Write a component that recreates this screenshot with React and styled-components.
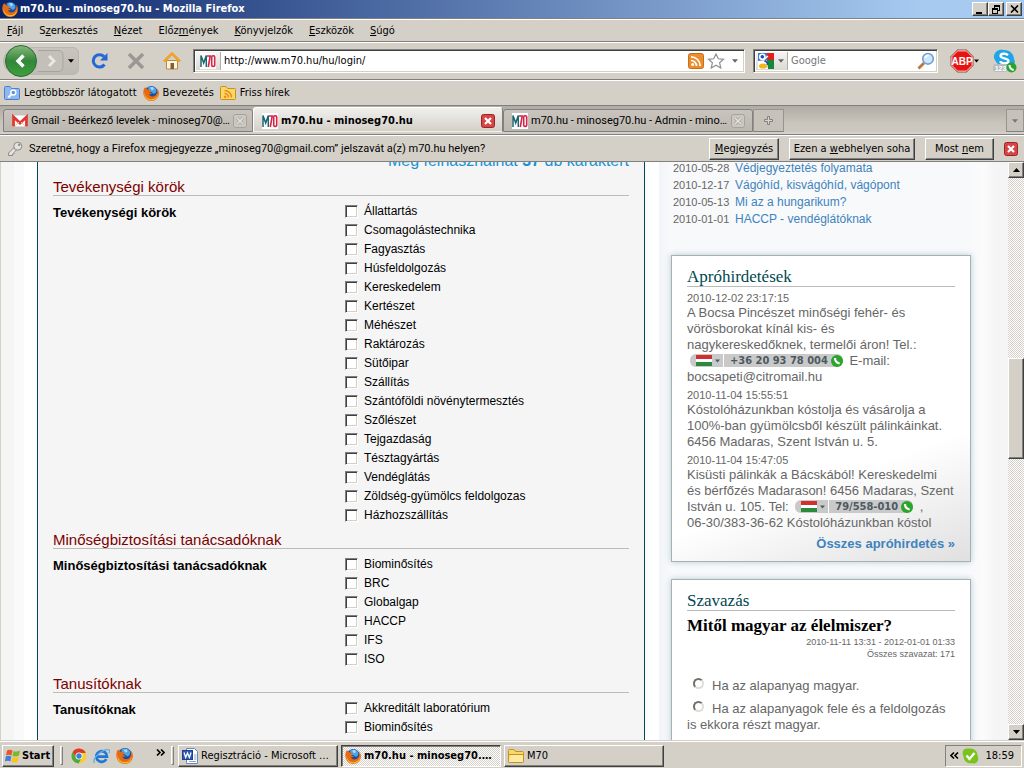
import React from "react";
import styled, { createGlobalStyle, css } from "styled-components";

const ui = `"DejaVu Sans Condensed", "Noto Sans", sans-serif`;
const narrow = `Roboto, "Noto Sans", sans-serif`;
const sans = `"Liberation Sans", Arial, sans-serif`;
const serif = `"Liberation Serif", "Times New Roman", serif`;
const face = "#d4d0c8";
const shadow = "#808080";

const Global = createGlobalStyle`
  * { box-sizing: border-box; }
  html, body, #root { height: 100%; }
  body { margin: 0; background: ${face}; font: 11px/14px ${ui}; color: #000; overflow: hidden; }
  button, input { font: inherit; color: inherit; margin: 0; }
  button { cursor: default; white-space: nowrap; }
  svg { display: block; flex: none; }
  a { text-decoration: none; }
`;

const raised = css`
  border: 1px solid;
  border-color: #fff #404040 #404040 #fff;
  box-shadow: inset -1px -1px 0 ${shadow};
  background: ${face};
`;

const Desktop = styled.div`
  height: 100vh;
  display: flex;
  flex-direction: column;
`;

/* ---------- window chrome ---------- */
const TitleBar = styled.header`
  height: 18px;
  flex: none;
  display: flex;
  align-items: center;
  gap: 2px;
  padding: 0 2px;
  color: #fff;
  background: linear-gradient(90deg, #0a246a, #a6caf0 90%);
`;
const Title = styled.h1`
  flex: 1;
  margin: 0;
  font-size: 11px;
  font-weight: bold;
  white-space: nowrap;
`;
const CaptionButtons = styled.div`
  display: flex;
`;
const CaptionButton = styled.button`
  ${raised}
  width: 16px;
  height: 14px;
  padding: 0;
  display: flex;
  align-items: center;
  justify-content: center;
  &:last-child { margin-left: 2px; }
`;
const Bar = styled.div`
  flex: none;
  display: flex;
  align-items: center;
  height: ${(p) => p.$h}px;
  border-top: 1px solid #fff;
  border-bottom: 1px solid ${shadow};
`;
const MenuBar = styled(Bar).attrs({ as: "nav" })`
  margin-top: 1px;
  box-shadow: 0 -1px 0 ${shadow};
`;
const MenuItem = styled.button`
  border: 0;
  background: none;
  padding: 0 8px;
  &:first-child { padding-left: 7px; }
`;
const NavBar = styled(Bar)`
  padding: 0 7px 0 3px;
`;
const HistoryPill = styled.div`
  display: flex;
  align-items: center;
  width: 76px;
  height: 28px;
  border-radius: 14px 6px 6px 14px;
  border: 1px solid #bab6b0;
  background: linear-gradient(#c9c5be, #bdb9b3);
`;
const IconButton = styled.button`
  border: 0;
  padding: 0;
  background: none;
  width: ${(p) => p.$w || 18}px;
  display: flex;
  align-items: center;
  justify-content: center;
`;
const NavIcons = styled.div`
  display: flex;
  gap: 18px;
  margin: 0 12px;
`;
const Field = styled.div`
  display: flex;
  align-items: center;
  height: 24px;
  min-width: 0;
  background: #fff;
  border: 1px solid;
  border-color: ${shadow} #fff #fff ${shadow};
  box-shadow: inset 1px 1px 0 #404040, inset -1px -1px 0 ${face};
  padding: 2px;
`;
const UrlField = styled(Field)`
  flex: 1;
`;
const SearchField = styled(Field)`
  width: 185px;
  margin-left: 8px;
`;
const FieldHead = styled.div`
  align-self: stretch;
  display: flex;
  align-items: center;
  gap: 4px;
  padding: 0 4px;
  border-right: 1px solid #b0aca6;
  background: linear-gradient(#f6f5f3, #dcd9d3);
`;
const SearchHead = styled(FieldHead)`
  padding: 0 3px 0 2px;
`;
const TextInput = styled.input`
  flex: 1;
  min-width: 0;
  border: 0;
  outline: 0;
  background: none;
  padding: 0 3px;
  &::placeholder { color: #777; opacity: 1; }
`;
const FieldIcons = styled.div`
  display: flex;
  align-items: center;
  gap: 3px;
`;
const Extensions = styled.div`
  display: flex;
  align-items: center;
  gap: 14px;
  margin-left: 11px;
`;
const Bookmarks = styled(Bar)`
  gap: 6px;
  padding: 0 4px;
`;
const Bookmark = styled.a`
  display: flex;
  align-items: center;
  gap: 4px;
  color: #000;
  white-space: nowrap;
`;

/* ---------- tabs ---------- */
const TabStrip = styled.div`
  flex: none;
  display: flex;
  align-items: flex-end;
  height: 29px;
  padding: 0 0 2px 3px;
  background: linear-gradient(#b0aca4, #c9c5bd 60%, #cdc9c1);
  border-bottom: 1px solid ${shadow};
  box-shadow: inset 0 -2px 0 ${face};
`;
const Tab = styled.div`
  flex: 0 1 250px;
  min-width: 0;
  display: flex;
  align-items: center;
  gap: 3px;
  height: 23px;
  padding: 0 7px 0 8px;
  border: 1px solid ${shadow};
  border-radius: 3px 3px 0 0;
  background: linear-gradient(#c9c5be, #bcb8b0);
  font-family: ${narrow};
  ${(p) =>
    p.$active &&
    css`
      height: 25px;
      padding-top: 2px;
      border-color: #fff ${shadow} transparent #fff;
      background: linear-gradient(#f1f0ed, ${face});
      font-family: ${ui};
      font-weight: bold;
    `}
`;
const TabLabel = styled.span`
  flex: 1;
  white-space: nowrap;
`;
const TabAction = styled.button`
  height: 23px;
  width: ${(p) => p.$w}px;
  padding: 0;
  display: flex;
  align-items: center;
  justify-content: center;
  border: 1px solid #98948e;
  border-bottom-color: ${shadow};
  background: #c6c2ba;
`;
const Spacer = styled.div`
  flex: 1;
`;
const Notice = styled(Bar)`
  gap: 10px;
  padding: 0 6px 0 7px;
`;
const NoticeText = styled.span`
  flex: 1;
  display: flex;
  align-items: center;
  gap: 6px;
  font-family: ${narrow};
  white-space: nowrap;
`;
const PushButton = styled.button`
  ${raised}
  width: ${(p) => p.$w}px;
  height: 22px;
  padding: 0;
`;

/* ---------- web page ---------- */
const Viewport = styled.div`
  flex: 1;
  min-height: 0;
  display: flex;
`;
const Page = styled.main`
  flex: 1;
  min-width: 0;
  display: flex;
  overflow: hidden;
  font-family: ${sans};
  border-left: 1px solid ${face};
  background: #f5f5f5;
`;
const Frame = styled.div`
  flex: 1;
  display: flex;
  margin-left: 13px;
  padding: 0 14px 0 23px;
  background: linear-gradient(90deg, #fafafa 10px, #fff 10px);
`;
const Form = styled.form`
  flex: 1;
  min-height: 0;
  padding: 0 15px;
  border: solid #004a55;
  border-width: 0 1px;
  background: #f5f5f5;
`;
const Scrolled = styled.div`
  margin-top: ${(p) => -p.$by}px;
`;
const Counter = styled.p`
  margin: 0 0 1px;
  font-size: 16px;
  line-height: 20px;
  text-align: right;
  color: #1793d6;
`;
const Group = styled.fieldset`
  margin: 0;
  border: 0;
  padding: 0;
`;
const GroupTitle = styled.h2`
  margin: 0 0 6px;
  padding-top: 7px;
  border-bottom: 1px solid #bbb;
  font-size: 15px;
  line-height: 16px;
  font-weight: normal;
  color: #7d0000;
`;
const GroupBody = styled.div`
  display: grid;
  grid-template-columns: 292px 1fr;
`;
const GroupLabel = styled.strong`
  font-size: 13px;
  line-height: 22px;
`;
const CheckRow = styled.label`
  display: flex;
  align-items: center;
  gap: 6px;
  font-size: 12px;
  line-height: 19px;
`;
const Check = styled.input.attrs({ type: "checkbox" })`
  appearance: none;
  width: 13px;
  height: 13px;
  background: #fff;
  border: 1px solid;
  border-color: ${shadow} #fff #fff ${shadow};
  box-shadow: inset 1px 1px 0 #404040, inset -1px -1px 0 ${face};
`;

const Side = styled.aside`
  flex: 0 0 349px;
  padding: 0 37px 0 12px;
  color: #666;
  background: linear-gradient(90deg, #f1f4f8, #f8f9fb 12px, #f8f9fb 310px, #fbfbfb 324px, #f5f5f5 336px);
`;
const NewsList = styled.ul`
  list-style: none;
  margin: 0 0 27px;
  padding: 0 0 0 2px;
`;
const NewsItem = styled.li`
  display: grid;
  grid-template-columns: 62px 1fr;
  font-size: 12px;
  line-height: 17px;
  white-space: nowrap;
  a { color: #3f83bd; }
  time { font-size: 11px; line-height: 16px; }
`;
const Card = styled.section`
  margin-bottom: 17px;
  padding: 12px 15px 9px;
  border: 1px solid #a7b0b3;
  box-shadow: 0 0 6px #b4cbd3;
  background: ${(p) => (p.$shaded ? "linear-gradient(160deg, #fff 68%, #e0e0e0)" : "#fff")};
`;
const CardTitle = styled.h2`
  margin: 0 0 5px;
  border-bottom: 1px solid #bbb;
  font: 17px/18px ${serif};
  color: #004752;
`;
const AdTime = styled.time`
  display: block;
  font-size: 11px;
  line-height: 13px;
`;
const AdText = styled.p`
  margin: 0 0 4px;
  font-size: 13px;
  line-height: 16px;
  white-space: nowrap;
`;
const MoreLink = styled.a`
  display: block;
  padding-top: 1px;
  text-align: right;
  font-size: 13px;
  line-height: 16px;
  font-weight: bold;
  color: #3f83bd;
`;
const Chip = styled.button`
  display: inline-flex;
  align-items: center;
  vertical-align: top;
  gap: 3px;
  height: 13px;
  margin: 1px 3px 0;
  padding: 0 0 0 6px;
  border: 0;
  border-radius: 6px;
  background: #c9c9c9;
  font: bold 11px/13px ${ui};
  color: #4c5a60;
  span { border-left: 1px solid #fff; padding-left: 6px; }
`;
const PollTitle = styled.h3`
  margin: 0;
  font: bold 17px/20px ${serif};
  color: #000;
`;
const PollMeta = styled.p`
  margin: 0 0 18px;
  text-align: right;
  font-size: 9px;
  line-height: 12px;
`;
const PollOption = styled.label`
  display: block;
  margin-bottom: 7px;
  font-size: 13px;
  line-height: 16px;
  white-space: nowrap;
`;
const Radio = styled.input.attrs({ type: "radio", name: "poll" })`
  appearance: none;
  width: 11px;
  height: 11px;
  && { margin: 0 8px 0 6px; }
  vertical-align: 1px;
  border-radius: 50%;
  background: #fff;
  border: 2px solid;
  border-color: #707070 #e0ddd6 #e0ddd6 #707070;
`;

/* ---------- scroll bar ---------- */
const ScrollBar = styled.div`
  flex: 0 0 16px;
  display: flex;
  flex-direction: column;
  background: repeating-conic-gradient(#fff 0 25%, ${face} 0 50%) 0 0 / 2px 2px;
`;
const ScrollButton = styled.button`
  ${raised}
  height: 16px;
  padding: 0;
  display: flex;
  align-items: center;
  justify-content: center;
`;
const Stretch = styled.div`
  flex: ${(p) => p.$n} 0 0;
`;
const Thumb = styled(Stretch)`
  ${raised}
`;

/* ---------- task bar ---------- */
const TaskBar = styled.footer`
  flex: none;
  display: flex;
  align-items: center;
  height: 28px;
  padding: 2px 2px 0;
  border-top: 1px solid ${face};
  box-shadow: inset 0 1px 0 #fff;
`;
const StartButton = styled.button`
  ${raised}
  width: 52px;
  height: 22px;
  padding: 0 2px;
  display: flex;
  align-items: center;
  gap: 1px;
  font-weight: bold;
`;
const Grip = styled.div`
  width: 3px;
  height: 19px;
  margin: ${(p) => p.$m};
  border: 1px solid;
  border-color: #fff ${shadow} ${shadow} #fff;
`;
const QuickLaunch = styled.div`
  display: flex;
  align-items: center;
  gap: 6px;
`;
const Chevron = styled.button`
  border: 0;
  background: none;
  padding: 0 0 ${(p) => p.$lift || 0}px;
  width: 12px;
  margin-left: ${(p) => p.$ml || 0}px;
  display: flex;
  justify-content: center;
`;
const TaskList = styled.div`
  flex: 1;
  display: flex;
  gap: 3px;
`;
const TaskButton = styled.button`
  ${raised}
  flex: 0 1 160px;
  min-width: 0;
  height: 22px;
  padding: 0 3px;
  display: flex;
  align-items: center;
  gap: 3px;
  text-align: left;
  ${(p) =>
    p.$active &&
    css`
      font-weight: bold;
      border-color: #404040 #fff #fff #404040;
      box-shadow: inset 1px 1px 0 ${shadow};
      background: repeating-conic-gradient(#fff 0 25%, ${face} 0 50%) 0 0 / 2px 2px;
    `}
`;
const Tray = styled.div`
  width: 77px;
  height: 22px;
  padding: 0 7px 0 2px;
  display: flex;
  align-items: center;
  gap: 2px;
  border: 1px solid;
  border-color: ${shadow} #fff #fff ${shadow};
  time { flex: 1; text-align: right; }
`;

/* ---------- icons ---------- */
const Firefox = ({ s = 16 }) => (
  <svg width={s} height={s} viewBox="0 0 16 16">
    <circle cx="8.300" cy="7.600" r="6.600" fill="#1d4f9e" />
    <path d="M5 2.500C7 .8 11 1 13 4c1 2 0 4-2 5L8 7l-2-.5z" fill="#4aa4e6" />
    <path d="M7 2.500l3-.5 1 2-2 1.500z" fill="#a9dcf7" />
    <path d="M1.500 2.500C.2 5 0 8 .8 10.500 2 14 5 16 8.200 16c4.300 0 7.600-3.200 7.700-7.500 0-2-.6-3.800-1.600-5 .3 2 .2 3.500-.6 5-.8 2-2.300 3-4.200 3-2 0-3.300-1-3.500-2.500 1 .4 2.200.2 3-.6l-2.800-1.200 2-1.600C7 5 5.500 5.200 4.500 4.300 3.500 4 3 3.500 3.200 2 2.500 2.300 2 3 1.800 3.500z" fill="#e66a12" />
    <path d="M1.500 7c.2 4 3 7 6.500 7.200 3.500.2 6-2 7-5.500-.2 4.500-3 6.600-6.700 6.700C4 15.300.8 12 1.500 7z" fill="#fbb829" />
  </svg>
);
const M70 = () => (
  <svg width="16" height="16" viewBox="0 0 16 16">
    <rect width="16" height="16" fill="#fff" />
    <path d="M1 14V2.500L3.700 10 6.300 2.500V14" fill="none" stroke="#1c6670" strokeWidth="1.500" />
    <path d="M7 3h3.200L8.300 14" fill="none" stroke="#d3264b" strokeWidth="1.600" />
    <rect x="11.700" y="2.800" width="3" height="10.600" rx="1.200" fill="none" stroke="#d3264b" strokeWidth="1.600" />
  </svg>
);
const Caret = ({ c = "#000", up, w = 7 }) => (
  <svg width={w} height="4" viewBox="0 0 7 4">
    <path d={up ? "M0 4h7L3.500 0z" : "M0 0h7L3.500 4z"} fill={c} />
  </svg>
);
const BackIcon = () => (
  <svg width="34" height="34" viewBox="0 0 34 34">
    <defs>
      <linearGradient id="bk" x1="0" y1="0" x2="0" y2="1">
        <stop offset="0" stopColor="#86b97c" />
        <stop offset=".5" stopColor="#33863a" />
        <stop offset="1" stopColor="#3fa03c" />
      </linearGradient>
    </defs>
    <circle cx="17" cy="17" r="15.500" fill="url(#bk)" stroke="#2c6b33" />
    <path d="M19.500 11.500L14 17l5.500 5.500" fill="none" stroke="#fff" strokeWidth="3.400" />
  </svg>
);
const ForwardIcon = () => (
  <svg width="26" height="22" viewBox="0 0 26 22">
    <path d="M0 .5h20q5 0 5 5v11q0 5-5 5H0" fill="#c3bfb9" stroke="#a7a39d" />
    <path d="M11 6l5 5-5 5" fill="none" stroke="#ebe9e6" strokeWidth="2.800" />
  </svg>
);
const Reload = () => (
  <svg width="18" height="18" viewBox="0 0 18 18">
    <path d="M13.500 12.500A6.200 6.200 0 1 1 13 4.600" fill="none" stroke="#2268d8" strokeWidth="3" />
    <path d="M16.500 1v7.500H9z" fill="#2268d8" />
  </svg>
);
const Stop = () => (
  <svg width="18" height="18" viewBox="0 0 18 18">
    <path d="M2 2l14 14M16 2L2 16" stroke="#9b9894" strokeWidth="3.600" />
  </svg>
);
const Home = () => (
  <svg width="18" height="18" viewBox="0 0 18 18">
    <path d="M3.500 8.500h11V17h-11z" fill="#fdf6e2" stroke="#b98a3b" />
    <path d="M1 9.500L9 1.500l8 8" fill="none" stroke="#f0a326" strokeWidth="2.600" />
    <path d="M7.500 11h3.500v6H7.500z" fill="#8a5a2b" />
  </svg>
);
const Rss = () => (
  <svg width="16" height="16" viewBox="0 0 16 16">
    <rect x=".5" y=".5" width="15" height="15" rx="2" fill="#ec8d2e" stroke="#c96f1c" />
    <circle cx="4.600" cy="11.500" r="1.500" fill="#fff" />
    <path d="M3 7.500a5.500 5.500 0 0 1 5.500 5.500M3 3.800A9.200 9.200 0 0 1 12.200 13" fill="none" stroke="#fff" strokeWidth="1.700" />
  </svg>
);
const Star = () => (
  <svg width="18" height="16" viewBox="0 0 18 16">
    <path d="M9 1l2.300 4.800 5.200.5-3.900 3.500 1.200 5.200L9 12.300 4.200 15l1.200-5.200L1.500 6.300l5.200-.5z" fill="#fff" stroke="#8f8f8f" strokeWidth="1.200" />
  </svg>
);
const Google = () => (
  <svg width="16" height="16" viewBox="0 0 16 16">
    <path d="M0 0h9v9H0z" fill="#3b77d8" />
    <path d="M9 0h7v7H9z" fill="#e0201b" />
    <path d="M9 7h7v9H8z" fill="#128a39" />
    <path d="M0 8l9-1 1 9H0z" fill="#fff" />
    <path d="M6.500 8q3.500.5 3 4" fill="none" stroke="#1d4fae" strokeWidth="2" />
    <circle cx="4.300" cy="3.800" r="2.600" fill="#1d4fae" stroke="#fff" strokeWidth="1.600" />
    <path d="M6 6.500L10 3" stroke="#fff" strokeWidth="1.400" />
    <ellipse cx="5" cy="13" rx="4" ry="2.600" fill="#f3b614" />
  </svg>
);
const Magnifier = () => (
  <svg width="18" height="18" viewBox="0 0 18 18">
    <path d="M1.500 16.500L7 11" stroke="#b97742" strokeWidth="2.800" />
    <circle cx="11" cy="6.800" r="5.300" fill="#cfe6fb" stroke="#6f9fd6" strokeWidth="1.600" />
    <path d="M8 6a3.500 3.500 0 0 1 3.500-2.500" fill="none" stroke="#fff" strokeWidth="1.500" />
  </svg>
);
const Abp = () => (
  <svg width="24" height="24" viewBox="0 0 24 24">
    <path d="M7.300.8h9.400l6.500 6.500v9.400l-6.500 6.500H7.300L.8 16.700V7.300z" fill="#e8130f" stroke="#8f8b86" />
    <path d="M7.600 1.900h8.800l5.700 5.700v8.800l-5.700 5.700H7.600l-5.700-5.700V7.600z" fill="none" stroke="#fff" strokeWidth=".8" />
    <text x="12" y="15.500" textAnchor="middle" fill="#fff" fontSize="10" fontWeight="bold" fontFamily="Liberation Sans">ABP</text>
  </svg>
);
const Skype = () => (
  <svg width="24" height="24" viewBox="0 0 24 24">
    <path d="M3 3c3-3 6-2 8-2 6 0 10 4 10 9 2 4 0 6-2 7-6 2-14 1-17-6C0 8 1 5 3 3z" fill="#1fa5e8" />
    <path d="M15 6.200C13 4 7.500 4.300 7.500 7c0 3 8 1.600 8 5 0 3-7 3-8.500.3" fill="none" stroke="#fff" strokeWidth="2.300" />
    <rect x="0" y="15" width="15" height="8" rx="3" fill="#b7bcbf" />
    <text x="7.500" y="21.500" textAnchor="middle" fill="#fff" fontSize="7" fontWeight="bold" fontFamily="Liberation Sans">123</text>
    <circle cx="18.500" cy="18.500" r="5" fill="#27a32a" />
    <path d="M16.500 16q0 4 4.200 5" fill="none" stroke="#fff" strokeWidth="2" />
  </svg>
);
const Folder = ({ kind }) => (
  <svg width="16" height="16" viewBox="0 0 16 16">
    <path
      d="M.5 2.500q0-1 1-1H6l1.500 2h7q1 0 1 1v9q0 1-1 1h-13q-1 0-1-1z"
      fill={kind === "search" ? "#8fb8f0" : "#fbd766"}
      stroke={kind === "search" ? "#4b80cf" : "#c3931d"}
    />
    {!kind && <path d="M.8 6.500h14.700v7q0 1-1 1h-13q-1 0-1-1z" fill="#fdeaa0" stroke="#c3931d" />}
    {kind === "search" && (
      <g fill="none" stroke="#fff">
        <circle cx="9.300" cy="7.500" r="2.500" fill="#5f94e2" strokeWidth="1.400" />
        <path d="M7.300 9.500l-3 3" strokeWidth="1.800" />
      </g>
    )}
    {kind === "feed" && (
      <g fill="none" stroke="#ee8a1c" strokeWidth="1.600">
        <path d="M4.500 8.500a4 4 0 0 1 4 4M4.500 5.500a7 7 0 0 1 7 7" />
        <circle cx="5.200" cy="11.800" r=".6" />
      </g>
    )}
  </svg>
);
const Gmail = () => (
  <svg width="16" height="16" viewBox="0 0 16 16">
    <rect x="0" y="2.500" width="16" height="11" fill="#fff" />
    <path d="M1.500 13.500V4L8 10l6.500-6v9.500" fill="none" stroke="#dd3a33" strokeWidth="2.800" />
    <path d="M3 13l4-4M13 13L9 9" stroke="#f1c7c4" />
  </svg>
);
const CloseIcon = ({ red }) => (
  <svg width="14" height="14" viewBox="0 0 14 14">
    <rect x=".5" y=".5" width="13" height="13" rx="2" fill={red ? "#d84545" : "#cbc8c2"} stroke={red ? "#9c2424" : "#a5a19b"} />
    {!red && <path d="M4 4l6 6M10 4l-6 6" stroke="#a09c96" strokeWidth="3" />}
    <path d="M4 4l6 6M10 4l-6 6" stroke={red ? "#fff" : "#e6e4e0"} strokeWidth={red ? 2.2 : 1.6} />
  </svg>
);
const Key = () => (
  <svg width="16" height="16" viewBox="0 0 16 16">
    <path d="M1.500 14.500v-2.500l6-6 2.500 2.500-3 3v1.500H5.500v1.500z" fill="#e4e2de" stroke="#8e8b86" />
    <circle cx="10.800" cy="5.200" r="4" fill="#e4e2de" stroke="#8e8b86" />
    <circle cx="12.200" cy="3.800" r="1.200" fill="#8e8b86" />
  </svg>
);
const Plus = () => (
  <svg width="9" height="9" viewBox="0 0 9 9">
    <path d="M3.500.5h2v3h3v2h-3v3h-2v-3h-3v-2h3z" fill="#d9d6d0" stroke="#85817b" />
  </svg>
);
const Flag = () => (
  <svg width="16" height="11" viewBox="0 0 16 11">
    <rect width="16" height="11" fill="#fff" />
    <rect width="16" height="4" fill="#d2302c" />
    <rect y="7" width="16" height="4" fill="#2b8a3c" />
  </svg>
);
const Phone = () => (
  <svg width="12" height="12" viewBox="0 0 12 12">
    <circle cx="6" cy="6" r="6" fill="#2ca52c" />
    <path d="M4 3q0 4.500 4.600 5.500" fill="none" stroke="#fff" strokeWidth="2.200" />
  </svg>
);
const WinLogo = () => (
  <svg width="16" height="16" viewBox="0 0 16 16">
    <path d="M2 2.500Q4.500 1 7.500 2.500L6.500 7.500Q4 6 1 7.500z" fill="#e8562a" />
    <path d="M8.500 3Q11.500 4.300 15 2.500L14 7.500Q11 9 7.500 8z" fill="#7ab929" />
    <path d="M.8 8.500Q3.500 7 6.300 8.500L5.300 13.500Q3 12 0 13.500z" fill="#3d7ee0" />
    <path d="M7.300 9Q10.500 10 13.800 8.500L12.800 13.500Q9.500 15 6.300 14z" fill="#f9c51d" />
  </svg>
);
const Chrome = () => (
  <svg width="16" height="16" viewBox="0 0 16 16">
    <circle cx="8" cy="8" r="7.500" fill="#f8cf2c" />
    <path d="M1.500 4.200A7.500 7.500 0 0 1 14.800 5H8L5 9.500z" fill="#dc3b2c" />
    <path d="M1.500 4.200A7.500 7.500 0 0 0 7.500 15.500L11 9.500 5 9.500z" fill="#4caa42" />
    <circle cx="8" cy="8" r="3.500" fill="#fff" />
    <circle cx="8" cy="8" r="2.700" fill="#3c80dc" />
  </svg>
);
const Explorer = () => (
  <svg width="17" height="16" viewBox="0 0 17 16">
    <path d="M13.300 11.200A5.400 5.400 0 1 1 14 8.700H4.500" fill="none" stroke="#1f78d4" strokeWidth="2.700" />
    <path d="M1.500 15C-1.500 11 9 .5 16 1.800c1 .7.600 2.200 0 3.200" fill="none" stroke="#61aeea" strokeWidth="1.300" />
  </svg>
);
const Word = () => (
  <svg width="16" height="16" viewBox="0 0 16 16">
    <path d="M4.500.5h8l3 3v12h-11z" fill="#fff" stroke="#6f86b8" />
    <path d="M12 7h2.500M12 9h2.500M12 11h2.500M7 13.500h7" stroke="#8ba2d6" />
    <rect x=".5" y="2.500" width="10" height="9" fill="#2b57b5" stroke="#1d3f8c" />
    <path d="M2 4.500l1.700 5 1.800-4.500 1.800 4.500 1.700-5" fill="none" stroke="#fff" strokeWidth="1.300" />
  </svg>
);
const Chev = ({ left }) => (
  <svg width="9" height="7" viewBox="0 0 9 7">
    <path d={left ? "M4 .5l-3 3 3 3M8 .5l-3 3 3 3" : "M1 .5l3 3-3 3M5 .5l3 3-3 3"} fill="none" stroke="#000" strokeWidth="1.600" />
  </svg>
);
const SkypeTray = () => (
  <svg width="17" height="16" viewBox="0 0 17 16">
    <path d="M2 1.500C4 0 6 .5 8.500.5c4 0 7 3 7 7 1.500 3 1 6-1.500 7.500-2 1-4 .3-5.500.3-4 0-7-3-7-7C.3 6 .3 3 2 1.500z" fill="#78c41c" />
    <path d="M4.500 7.500L7.500 11l5-6" fill="none" stroke="#fff" strokeWidth="2.300" />
  </svg>
);
const Minimize = () => (
  <svg width="10" height="9" viewBox="0 0 10 9"><path d="M1 7h6v2H1z" /></svg>
);
const Restore = () => (
  <svg width="10" height="9" viewBox="0 0 10 9" shapeRendering="crispEdges">
    <path d="M3 0h6v6H7V5h1V2H4v1H3zM1 3h6v6H1zM2 5v3h4V5z" fillRule="evenodd" />
  </svg>
);
const CloseGlyph = () => (
  <svg width="9" height="8" viewBox="0 0 9 8"><path d="M1 .5l7 7M8 .5l-7 7" stroke="#000" strokeWidth="1.600" /></svg>
);

/* ---------- data ---------- */
const menus = [
  ["", "F", "ájl"], ["S", "z", "erkesztés"], ["", "N", "ézet"], ["Előz", "m", "ények"],
  ["", "K", "önyvjelzők"], ["", "E", "szközök"], ["", "S", "úgó"],
];
const groups = [
  ["Tevékenységi körök", ["Állattartás", "Csomagolástechnika", "Fagyasztás", "Húsfeldolgozás", "Kereskedelem", "Kertészet", "Méhészet", "Raktározás", "Sütőipar", "Szállítás", "Szántóföldi növénytermesztés", "Szőlészet", "Tejgazdaság", "Tésztagyártás", "Vendéglátás", "Zöldség-gyümölcs feldolgozas", "Házhozszállítás"]],
  ["Minőségbiztosítási tanácsadóknak", ["Biominősítés", "BRC", "Globalgap", "HACCP", "IFS", "ISO"]],
  ["Tanusítóknak", ["Akkreditált laboratórium", "Biominősítés"]],
];
const news = [
  ["2010-05-28", "Védjegyeztetés folyamata"],
  ["2010-12-17", "Vágóhíd, kisvágóhíd, vágópont"],
  ["2010-05-13", "Mi az a hungarikum?"],
  ["2010-01-01", "HACCP - vendéglátóknak"],
];

const PhoneChip = ({ children }) => (
  <Chip type="button">
    <Flag />
    <Caret c="#4c5a60" w={5} />
    <span>{children}</span>
    <Phone />
  </Chip>
);

export default function App() {
  return (
    <Desktop>
      <Global />
      <TitleBar>
        <Firefox />
        <Title>m70.hu - minoseg70.hu - Mozilla Firefox</Title>
        <CaptionButtons>
          <CaptionButton aria-label="Minimize"><Minimize /></CaptionButton>
          <CaptionButton aria-label="Restore"><Restore /></CaptionButton>
          <CaptionButton aria-label="Close"><CloseGlyph /></CaptionButton>
        </CaptionButtons>
      </TitleBar>
      <MenuBar $h={23}>
        {menus.map(([a, k, b]) => (
          <MenuItem key={a + k + b}>{a}<u>{k}</u>{b}</MenuItem>
        ))}
      </MenuBar>
      <NavBar $h={38}>
        <HistoryPill>
          <IconButton $w={34} aria-label="Back"><BackIcon /></IconButton>
          <IconButton $w={26} aria-label="Forward"><ForwardIcon /></IconButton>
          <IconButton $w={14} aria-label="History"><Caret w={6} /></IconButton>
        </HistoryPill>
        <NavIcons>
          <IconButton aria-label="Reload"><Reload /></IconButton>
          <IconButton aria-label="Stop"><Stop /></IconButton>
          <IconButton aria-label="Home"><Home /></IconButton>
        </NavIcons>
        <UrlField>
          <FieldHead><M70 /></FieldHead>
          <TextInput aria-label="URL" defaultValue="http://www.m70.hu/hu/login/" />
          <FieldIcons>
            <Rss />
            <Star />
            <IconButton $w={14} aria-label="Show history"><Caret c="#666" w={6} /></IconButton>
          </FieldIcons>
        </UrlField>
        <SearchField>
          <SearchHead><Google /><Caret c="#666" w={6} /></SearchHead>
          <TextInput aria-label="Search" placeholder="Google" />
          <Magnifier />
        </SearchField>
        <Extensions>
          <IconButton $w={30} aria-label="Adblock Plus"><Abp /><Caret w={5} /></IconButton>
          <IconButton $w={24} aria-label="Skype"><Skype /></IconButton>
        </Extensions>
      </NavBar>
      <Bookmarks $h={26}>
        <Bookmark href="#"><Folder kind="search" />Legtöbbször látogatott</Bookmark>
        <Bookmark href="#"><Firefox />Bevezetés</Bookmark>
        <Bookmark href="#"><Folder kind="feed" />Friss hírek</Bookmark>
      </Bookmarks>
      <TabStrip>
        <Tab><Gmail /><TabLabel>Gmail - Beérkező levelek - minoseg70@…</TabLabel><CloseIcon /></Tab>
        <Tab $active><M70 /><TabLabel>m70.hu - minoseg70.hu</TabLabel><CloseIcon red /></Tab>
        <Tab><M70 /><TabLabel>m70.hu - minoseg70.hu - Admin - mino…</TabLabel><CloseIcon /></Tab>
        <TabAction $w={31} aria-label="New tab"><Plus /></TabAction>
        <Spacer />
        <TabAction $w={18} aria-label="All tabs"><Caret c="#777" w={6} /></TabAction>
      </TabStrip>
      <Notice $h={27}>
        <NoticeText><Key />Szeretné, hogy a Firefox megjegyezze „minoseg70@gmail.com” jelszavát a(z) m70.hu helyen?</NoticeText>
        <PushButton $w={70}><u>M</u>egjegyzés</PushButton>
        <PushButton $w={126}>Ezen a <u>w</u>ebhelyen soha</PushButton>
        <PushButton $w={69}>Most <u>n</u>em</PushButton>
        <IconButton $w={14} aria-label="Close"><CloseIcon red /></IconButton>
      </Notice>

      <Viewport>
        <Page>
          <Frame>
            <Form>
              <Scrolled $by={11}>
                <Counter>Még felhasználhat <b>37</b> db karaktert</Counter>
                {groups.map(([name, items]) => (
                  <Group key={name} aria-label={name}>
                    <GroupTitle>{name}</GroupTitle>
                    <GroupBody>
                      <GroupLabel>{name}</GroupLabel>
                      <div>
                        {items.map((t) => (
                          <CheckRow key={t}><Check />{t}</CheckRow>
                        ))}
                      </div>
                    </GroupBody>
                  </Group>
                ))}
              </Scrolled>
            </Form>
          </Frame>
          <Side>
            <Scrolled $by={2}>
              <NewsList>
                {news.map(([d, t]) => (
                  <NewsItem key={t}><time>{d}</time><a href="#">{t}</a></NewsItem>
                ))}
              </NewsList>
              <Card $shaded>
                <CardTitle>Apróhirdetések</CardTitle>
                <AdTime>2010-12-02 23:17:15</AdTime>
                <AdText>
                  A Bocsa Pincészet minőségi fehér- és<br />vörösborokat kínál kis- és<br />
                  nagykereskedőknek, termelői áron! Tel.:<br />
                  <PhoneChip>+36 20 93 78 004</PhoneChip> E-mail:<br />bocsapeti@citromail.hu
                </AdText>
                <AdTime>2010-11-04 15:55:51</AdTime>
                <AdText>
                  Kóstolóházunkban kóstolja és vásárolja a<br />100%-ban gyümölcsből készült pálinkáinkat.<br />
                  6456 Madaras, Szent István u. 5.
                </AdText>
                <AdTime>2010-11-04 15:47:05</AdTime>
                <AdText>
                  Kisüsti pálinkák a Bácskából! Kereskedelmi<br />és bérfőzés Madarason! 6456 Madaras, Szent<br />
                  István u. 105. Tel: <PhoneChip>79/558-010</PhoneChip> ,<br />
                  06-30/383-36-62 Kóstolóházunkban kóstol
                </AdText>
                <MoreLink href="#">Összes apróhirdetés »</MoreLink>
              </Card>
              <Card>
                <CardTitle>Szavazás</CardTitle>
                <PollTitle>Mitől magyar az élelmiszer?</PollTitle>
                <PollMeta>2010-11-11 13:31 - 2012-01-01 01:33<br />Összes szavazat: 171</PollMeta>
                <PollOption><Radio />Ha az alapanyag magyar.</PollOption>
                <PollOption><Radio />Ha az alapanyagok fele és a feldolgozás<br />is ekkora részt magyar.</PollOption>
                <PollOption><Radio aria-label="3" /></PollOption>
              </Card>
            </Scrolled>
          </Side>
        </Page>
        <ScrollBar>
          <ScrollButton aria-label="Scroll up"><Caret up /></ScrollButton>
          <Stretch $n={181} />
          <Thumb $n={99} />
          <Stretch $n={266} />
          <ScrollButton aria-label="Scroll down"><Caret /></ScrollButton>
        </ScrollBar>
      </Viewport>

      <TaskBar>
        <StartButton><WinLogo />Start</StartButton>
        <Grip $m="0 7px 0 6px" />
        <QuickLaunch>
          <IconButton $w={17} aria-label="Chrome"><Chrome /></IconButton>
          <IconButton $w={17} aria-label="Internet Explorer"><Explorer /></IconButton>
          <IconButton $w={17} aria-label="Firefox"><Firefox s={17} /></IconButton>
        </QuickLaunch>
        <Chevron $ml={21} $lift={7} aria-label="More"><Chev /></Chevron>
        <Grip $m="0 4px 0 5px" />
        <TaskList>
          <TaskButton><Word />Regisztráció - Microsoft …</TaskButton>
          <TaskButton $active><Firefox />m70.hu - minoseg70.…</TaskButton>
          <TaskButton><Folder />M70</TaskButton>
        </TaskList>
        <Tray>
          <Chevron aria-label="Show hidden icons"><Chev left /></Chevron>
          <SkypeTray />
          <time>18:59</time>
        </Tray>
      </TaskBar>
    </Desktop>
  );
}
